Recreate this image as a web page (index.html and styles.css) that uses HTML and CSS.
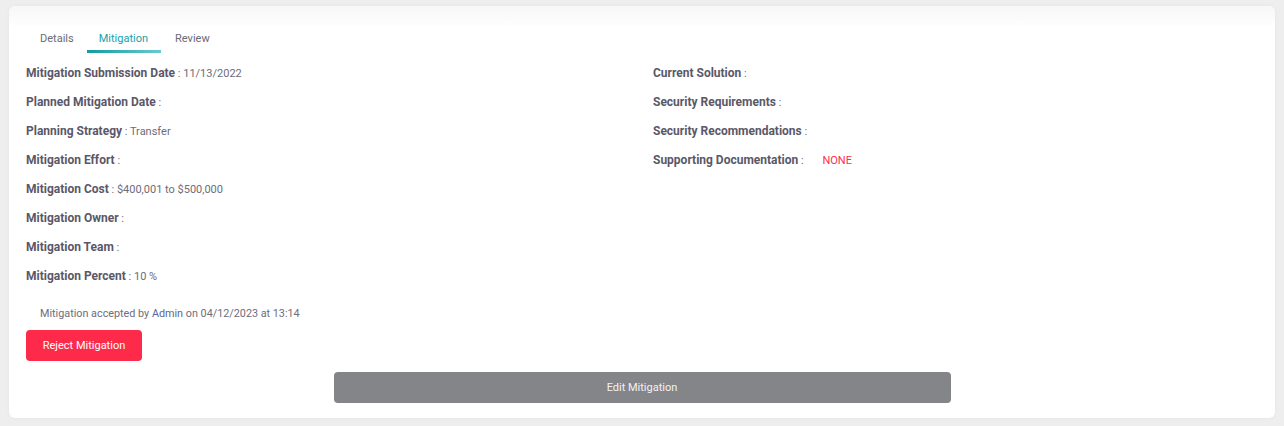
FILE: index.html
```html
<!DOCTYPE html>
<html>
<head>
<meta charset="utf-8">
<link rel="stylesheet" href="styles.css">
</head>
<body>
<div class="card">
  <div class="card-head"></div>
  <div class="card-body">
    <nav class="tabs">
      <span class="tab">Details</span>
      <span class="tab active">Mitigation</span>
      <span class="tab">Review</span>
    </nav>
    <div class="fields">
      <div class="col">
        <div class="field"><b>Mitigation Submission Date</b> : 11/13/2022</div>
        <div class="field"><b>Planned Mitigation Date</b> :</div>
        <div class="field"><b>Planning Strategy</b> : Transfer</div>
        <div class="field"><b>Mitigation Effort</b> :</div>
        <div class="field"><b>Mitigation Cost</b> : $400,001 to $500,000</div>
        <div class="field"><b>Mitigation Owner</b> :</div>
        <div class="field"><b>Mitigation Team</b> :</div>
        <div class="field"><b>Mitigation Percent</b> : 10 %</div>
      </div>
      <div class="col">
        <div class="field"><b>Current Solution</b> :</div>
        <div class="field"><b>Security Requirements</b> :</div>
        <div class="field"><b>Security Recommendations</b> :</div>
        <div class="field"><b>Supporting Documentation</b> : <span class="none">NONE</span></div>
      </div>
    </div>
    <p class="accepted">Mitigation accepted by <span class="admin">Admin</span> on 04/12/2023 at 13:14</p>
    <div class="reject-row"><button class="btn btn-reject">Reject Mitigation</button></div>
    <div class="edit-row"><button class="btn btn-edit">Edit Mitigation</button></div>
  </div>
</div>
</body>
</html>
```

FILE: styles.css
```css
html, body {
  margin: 0;
  padding: 0;
}
body {
  background: #eeeeee;
  font-family: "Roboto", "Liberation Sans", sans-serif;
  font-size: 11px;
  color: #6b6b78;
  padding: 6px 9px 0 9px;
  height: 426px;
  box-sizing: border-box;
}
.card {
  background: #ffffff;
  border-radius: 6px;
  height: 412px;
  box-shadow: 0 0 4px rgba(0,0,0,0.04);
  display: flex;
  flex-direction: column;
  overflow: hidden;
}
.card-head {
  height: 20px;
  background: linear-gradient(#f7f7f7, #fefefe);
  flex: none;
}
.card-body {
  padding: 0 17px 15px 17px;
  display: flex;
  flex-direction: column;
  flex: 1;
}
.tabs {
  display: flex;
  height: 27px;
  align-items: flex-end;
}
.tab {
  padding: 0 13px 0 14px;
  height: 27px;
  line-height: 25px;
  box-sizing: border-box;
  color: #6a6a76;
  font-size: 11px;
}
.tab.active {
  color: #1a9fa8;
  border-bottom: 3px solid transparent;
  border-image: linear-gradient(90deg, #109ba3, #6ccad0) 1;
  padding: 0 13px 0 12px;
}
.fields {
  display: grid;
  grid-template-columns: 627px 1fr;
  margin-top: 6px;
}
.field {
  height: 29px;
  line-height: 29px;
  white-space: nowrap;
  color: #6d6d79;
}
.field b {
  color: #5a5868;
  font-weight: 700;
  font-size: 12px;
}
.none {
  color: #fe2d4c;
  margin-left: 16px;
}
.accepted {
  margin: 15px 0 0 14px;
  height: 16px;
  line-height: 16px;
  color: #6d6d7b;
  font-size: 10.8px;
}
.admin {
  color: #5a6796;
}
.reject-row {
  margin-top: 8px;
}
.btn {
  font-family: inherit;
  font-size: 11px;
  border: none;
  border-radius: 4px;
  color: #ffffff;
  height: 31px;
  cursor: pointer;
}
.btn-reject {
  background: #fe2a4a;
  width: 116px;
}
.edit-row {
  margin-top: auto;
  display: flex;
  justify-content: center;
}
.btn-edit {
  background: #848589;
  width: 617px;
  color: #f2f2f2;
}
```
